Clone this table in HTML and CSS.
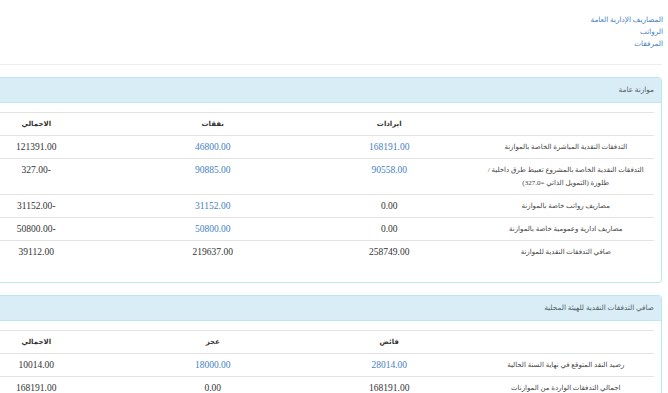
FILE: index.html
```html
<!DOCTYPE html>
<html lang="ar" dir="rtl">
<head>
<meta charset="utf-8">
<title>الموازنة</title>
<link rel="stylesheet" href="styles.css">
</head>
<body>
<div class="page">
  <ul class="links">
    <li><a href="#">المصاريف الإدارية العامة</a></li>
    <li><a href="#">الرواتب</a></li>
    <li><a href="#">المرفقات</a></li>
  </ul>
  <hr class="sep">

  <div class="panel">
    <div class="panel-heading">موازنة عامة</div>
    <div class="panel-body">
      <table class="grid">
        <thead>
          <tr><th></th><th>ايرادات</th><th>نفقات</th><th>الاجمالي</th></tr>
        </thead>
        <tbody>
          <tr><td>التدفقات النقدية المباشرة الخاصة بالموازنة</td><td class="n"><a href="#">168191.00</a></td><td class="n"><a href="#">46800.00</a></td><td class="n">121391.00</td></tr>
          <tr><td>التدفقات النقدية الخاصة بالمشروع تعبيط طرق داخلية / طلوزة (التمويل الذاتي =327.0)</td><td class="n"><a href="#">90558.00</a></td><td class="n"><a href="#">90885.00</a></td><td class="n">-327.00</td></tr>
          <tr><td>مصاريف رواتب خاصة بالموازنة</td><td class="n">0.00</td><td class="n"><a href="#">31152.00</a></td><td class="n">-31152.00</td></tr>
          <tr><td>مصاريف ادارية وعمومية خاصة بالموازنة</td><td class="n">0.00</td><td class="n"><a href="#">50800.00</a></td><td class="n">-50800.00</td></tr>
          <tr><td>صافي التدفقات النقدية للموازنة</td><td class="n">258749.00</td><td class="n">219637.00</td><td class="n">39112.00</td></tr>
        </tbody>
      </table>
    </div>
  </div>

  <div class="panel">
    <div class="panel-heading">صافي التدفقات النقدية للهيئة المحلية</div>
    <div class="panel-body">
      <table class="grid">
        <thead>
          <tr><th></th><th>فائض</th><th>عجز</th><th>الاجمالي</th></tr>
        </thead>
        <tbody>
          <tr><td>رصيد النقد المتوقع في نهاية السنة الحالية</td><td class="n"><a href="#">28014.00</a></td><td class="n"><a href="#">18000.00</a></td><td class="n">10014.00</td></tr>
          <tr><td>اجمالي التدفقات الواردة من الموازنات</td><td class="n">168191.00</td><td class="n">0.00</td><td class="n">168191.00</td></tr>
        </tbody>
      </table>
    </div>
  </div>
</div>
</body>
</html>
```

FILE: styles.css
```css
html, body {
  margin: 0;
  padding: 0;
  background: #ffffff;
}

body {
  direction: rtl;
  font-family: "Liberation Serif", "DejaVu Sans", serif;
  font-size: 7.3px;
  color: #444444;
  padding-right: 6px;
  overflow: hidden;
}

.page {
  width: 722px;
  padding-top: 14px;
}

.links {
  list-style: none;
  margin: 0;
  padding: 0;
  line-height: 12px;
  margin-right: -1px;
}

a {
  color: #4582c4;
  text-decoration: none;
}

.sep {
  border: 0;
  border-top: 1px solid #eeeeee;
  margin: 14px 0 12px 0;
  height: 0;
}

.panel {
  border: 1px solid #bce8f1;
  border-radius: 3px;
  margin-bottom: 12px;
  background: #ffffff;
}

.panel-heading {
  background: #d9edf7;
  color: #555f66;
  border-bottom: 1px solid #bce8f1;
  height: 24px;
  line-height: 24px;
  padding: 0 7px;
  border-radius: 2px 2px 0 0;
}

.panel-body {
  padding: 9px 7px 12px 7px;
}

.grid {
  width: 100%;
  table-layout: fixed;
  border-collapse: collapse;
  margin-bottom: 7px;
}

.grid th,
.grid td {
  border-top: 1px solid #e4e4e4;
  padding: 5px 8px 4px 8px;
  line-height: 13px;
  text-align: center;
  vertical-align: top;
  font-size: 7px;
}

.grid th {
  font-weight: bold;
  color: #333333;
}

.grid td.n {
  font-size: 9.5px;
  color: #333333;
}
```
